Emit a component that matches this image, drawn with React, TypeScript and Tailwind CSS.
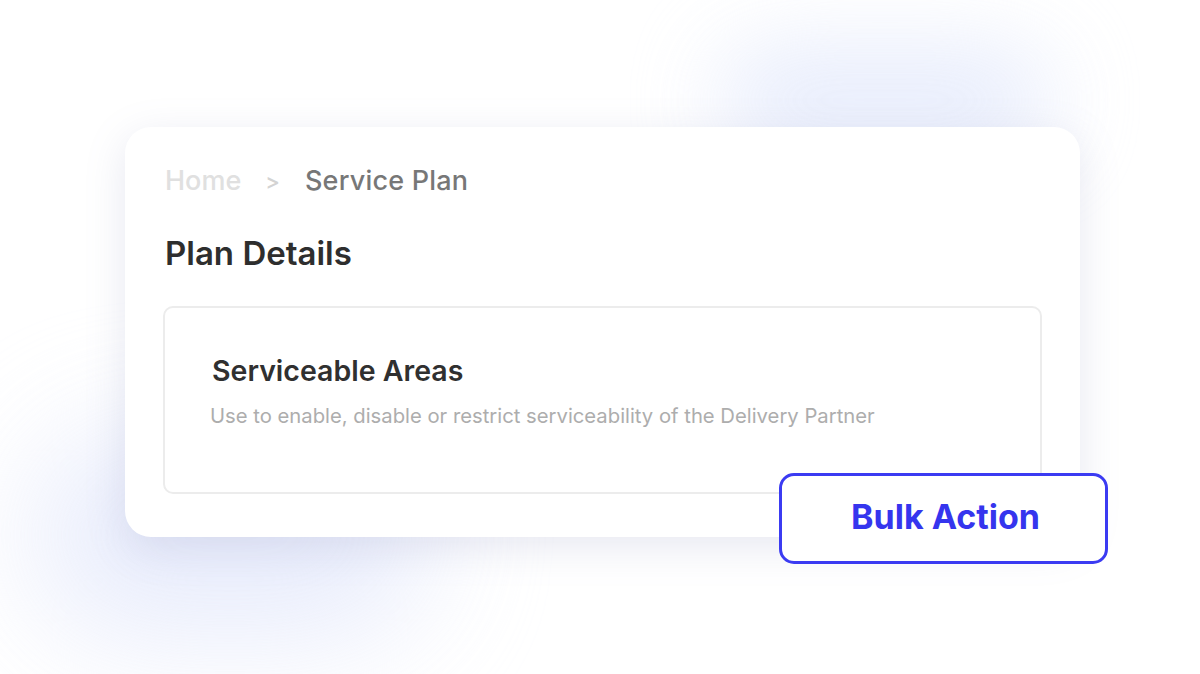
import React from "react";

export default function App() {
  return (
    <div
      className="relative w-[1200px] h-[674px] bg-white overflow-hidden"
      style={{ fontFamily: "Inter, 'Noto Sans', sans-serif" }}
    >
      {/* background glows */}
      <div className="absolute left-[720px] top-[50px] w-[330px] h-[100px] rounded-full bg-[#dfe6fb] blur-[45px] opacity-80" />
      <div className="absolute left-[30px] top-[430px] w-[400px] h-[210px] rounded-full bg-[#e3e8fb] blur-[60px] opacity-80" />

      <div className="relative pl-[125px] pt-[127px]">
        <div className="relative w-[955px] h-[410px] bg-white rounded-[26px] shadow-[0_10px_40px_rgba(120,130,180,0.18)] pl-[40px] pr-[38px] pt-[36px]">
          <div className="flex items-center text-[27px] leading-[36px] font-medium">
            <span className="text-[#e0e0e0]">Home</span>
            <span className="text-[#d3d3d3] ml-[24px] mr-[25px] text-[22px]">&gt;</span>
            <span className="text-[#777777] tracking-[0.2px]">Service Plan</span>
          </div>
          <h1 className="mt-[35px] text-[33px] leading-[38px] font-semibold text-[#2e2e2e]">
            Plan Details
          </h1>
          <div className="mt-[34px] ml-[-2px] h-[188px] border-2 border-[#ececec] rounded-[10px] pl-[47px] pt-[47px]">
            <div className="text-[28.5px] leading-[32px] font-semibold text-[#303030]">
              Serviceable Areas
            </div>
            <div className="mt-[17px] -ml-[2px] text-[20.25px] leading-[24px] text-[#adadad]">
              Use to enable, disable or restrict serviceability of the Delivery Partner
            </div>
          </div>
        </div>
        <button className="absolute left-[779px] top-[473px] w-[329px] h-[91px] bg-white border-[3px] border-[#3b3bf2] rounded-[15px] text-[34px] leading-[40px] font-bold text-[#3535ee] flex items-center justify-center pl-[4px] pb-[3px]">
          Bulk Action
        </button>
      </div>
    </div>
  );
}
